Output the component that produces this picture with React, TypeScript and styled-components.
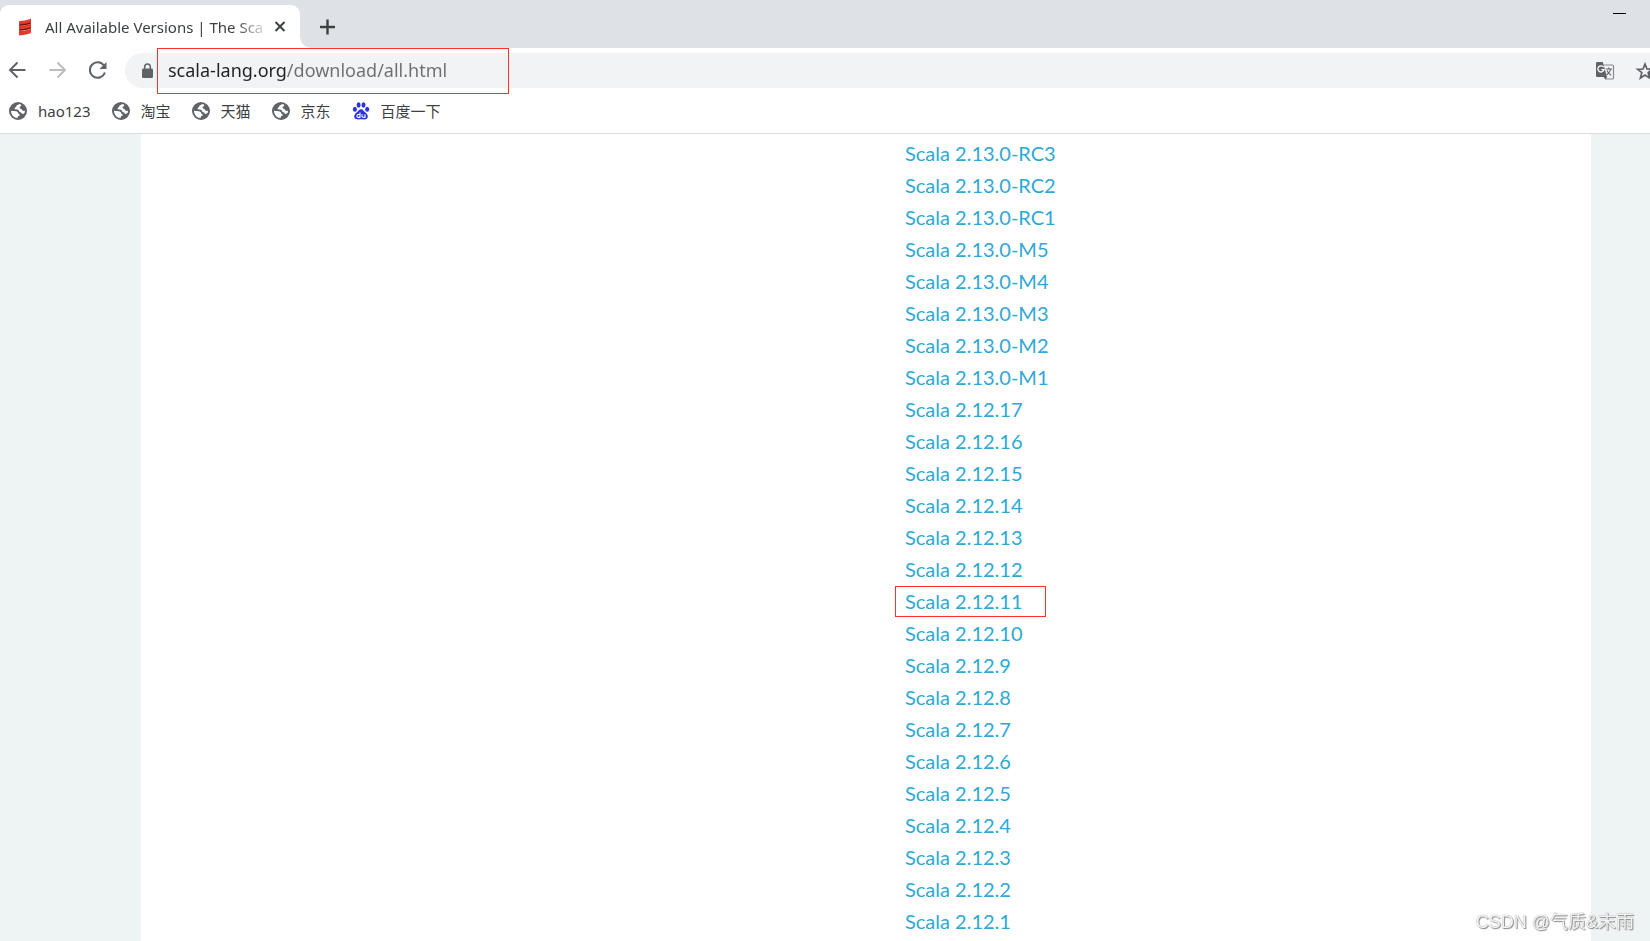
import React from 'react';
import styled, { createGlobalStyle } from 'styled-components';

const GlobalStyle = createGlobalStyle`
  *, *::before, *::after { box-sizing: border-box; }
  body {
    margin: 0;
    background: #fff;
    font-family: "Noto Sans", "Noto Sans CJK SC", sans-serif;
    color: #3c4043;
  }
`;

const Page = styled.div`
  display: flex;
  flex-direction: column;
  min-height: 100vh;
  overflow: hidden;
`;

const TabStrip = styled.header`
  display: flex;
  justify-content: space-between;
  height: 48px;
  padding-top: 5px;
  background: #dee1e6;
`;

const Tabs = styled.div`
  display: flex;
`;

const Tab = styled.div`
  position: relative;
  display: flex;
  align-items: center;
  width: 300px;
  padding: 0 12px 0 16px;
  border-radius: 9px 9px 0 0;
  background: #fff;

  &::after {
    content: "";
    position: absolute;
    left: 100%;
    bottom: 0;
    width: 10px;
    height: 10px;
    background: radial-gradient(circle at 100% 0, transparent 9px, #fff 10px);
  }
`;

const TabTitle = styled.span`
  flex: 1;
  margin-left: 11px;
  overflow: hidden;
  white-space: nowrap;
  font-size: 15px;
  line-height: 24px;
  mask-image: linear-gradient(to right, #000 calc(100% - 36px), transparent calc(100% - 2px));
`;

const IconButton = styled.button<{ $size?: number; $color?: string }>`
  display: flex;
  flex: none;
  align-items: center;
  justify-content: center;
  width: ${(p) => p.$size ?? 24}px;
  height: ${(p) => p.$size ?? 24}px;
  padding: 0;
  border: 0;
  background: none;
  color: ${(p) => p.$color ?? '#5f6368'};
`;

const NewTab = styled(IconButton)`
  align-self: center;
  margin-left: 15px;
`;

const WindowControls = styled.div`
  padding-right: 18px;
`;

const Toolbar = styled.div`
  display: flex;
  align-items: center;
  gap: 16px;
  height: 45px;
  padding-left: 5px;
`;

const NavButtons = styled.div`
  display: flex;
  gap: 16px;
  padding-bottom: 2px;
`;

const AddressBar = styled.div`
  display: flex;
  flex: 1;
  align-items: center;
  height: 35px;
  padding-left: 14px;
  border-radius: 18px 0 0 18px;
  background: #f1f3f4;
`;

const UrlFrame = styled.label`
  flex: none;
  width: 352px;
  height: 46px;
  margin-left: 2px;
  padding-left: 10px;
  border: 1px solid #f8322f;
`;

const UrlInput = styled.input`
  width: 100%;
  height: 44px;
  padding: 0 0 2px;
  border: 0;
  outline: 0;
  font: 18px "Noto Sans", sans-serif;
  color: transparent;
  background: linear-gradient(to right, #202124 119px, #6b6f73 119px);
  background-clip: text;
`;

const AddressActions = styled.div`
  display: flex;
  gap: 16px;
  margin-left: auto;
  margin-right: -7px;
`;

const Bookmarks = styled.nav`
  display: flex;
  align-items: center;
  gap: 21px;
  height: 41px;
  padding: 0 9px 4px;
  border-bottom: 1px solid #dadce0;
`;

const Bookmark = styled.a`
  display: flex;
  align-items: center;
  gap: 11px;
  color: #3c4043;
  font-size: 15px;
  line-height: 24px;
  text-decoration: none;
`;

const Body = styled.div`
  flex: 1;
  padding: 0 59px 0 141px;
  background: #eef3f4;
`;

const Sheet = styled.main`
  display: grid;
  grid-template-columns: 754fr 696fr;
  height: 100%;
  min-height: 807px;
  padding-top: 3px;
  background: #fff;
`;

const Versions = styled.ul`
  grid-column: 2;
  margin: 0;
  padding: 0;
  list-style: none;
`;

const Version = styled.li`
  display: flex;
  align-items: center;
  height: 32px;
`;

const VersionLink = styled.a<{ $framed: boolean }>`
  width: 151px;
  padding-left: 9px;
  border: 1px solid ${(p) => (p.$framed ? '#f8322f' : 'transparent')};
  color: #2fa8d3;
  font-family: Lato, sans-serif;
  font-size: 20px;
  line-height: 29px;
  text-decoration: none;
  white-space: nowrap;
`;

const Watermark = styled.div`
  position: fixed;
  right: 16px;
  bottom: 6px;
  color: #f4f4f4;
  font: 18px/26px "Liberation Sans", "Noto Sans CJK SC", sans-serif;
  text-shadow: 1px 1px 1px #888, 0 0 1px #888;
`;

const ScalaLogo = () => (
  <svg width="18" height="20" viewBox="0 0 18 20" aria-hidden="true">
    <path d="M3 4.2C8 3.6 13 3 15 1.5V6C13 7.6 8 8 3 8.7Z M3 9C8 8.4 13 7.8 15 6.3V11C13 12.6 8 13 3 13.7Z M3 14.1C8 13.5 13 12.9 15 11.4V15.6C13 17.5 8 17.9 3 18.5Z" fill="#e8372a" />
    <path d="M3.5 8.2C8 7.8 13 7 14.6 5.8M3.5 13.2C8 12.8 13 12 14.6 10.8" stroke="#5d1713" strokeWidth="1.3" fill="none" />
  </svg>
);

const Globe = () => (
  <svg width="18" height="18" viewBox="0 0 18 18" aria-hidden="true">
    <circle cx="9" cy="9" r="9" fill="#5f6368" />
    <path d="M10 2C9.6 3.2 7.4 3 7.2 4.4C7.1 5.4 5.4 5.2 5.6 6.8C5.8 8.2 8.4 7.4 9.4 8C10.2 8.5 9.9 10 11.2 10.2C12.6 10.3 12.8 12 14 12C15.2 11.8 16 10.4 16 8.8C14.6 9.2 13.2 8.8 12.8 7.6C12.4 6.6 10.6 7 10.6 5.6C10.7 4.4 12 4.4 12.4 2.9C11.6 2.4 10.8 2.1 10 2Z" fill="#fff" />
    <path d="M2 8.7C4.2 9.1 6.5 8.6 8 9.6C9.6 10.6 8.8 11.8 10.3 12.2C11.3 12.6 11 13.6 10 13.8C8.8 14 9 14.8 8.5 16C4.8 15.8 2 12.8 2 8.7Z" fill="#fff" />
  </svg>
);

const Paw = () => (
  <svg width="18" height="18" viewBox="0 0 18 18" aria-hidden="true">
    <g fill="#2932e1">
      <ellipse cx="2.9" cy="7.2" rx="2" ry="2.5" />
      <ellipse cx="6.6" cy="3" rx="2" ry="2.7" />
      <ellipse cx="11.5" cy="3" rx="2" ry="2.7" />
      <ellipse cx="15.2" cy="7.2" rx="2" ry="2.5" />
      <path d="M9 7.3C11 7.3 11.8 9.2 13.4 10.6C15.6 12.4 16.4 14 15.4 16C14.2 18 11.5 17.3 9 17.3S3.8 18 2.6 16C1.6 14 2.4 12.4 4.6 10.6C6.2 9.2 7 7.3 9 7.3Z" />
    </g>
    <path d="M8 10.6V15.4H6.2C4.5 15.4 4.5 12.5 6.2 12.5H8M10 12.3V14.3C10 15.4 10.6 15.4 13 15.4V12.3" stroke="#fff" strokeWidth="1.1" fill="none" />
  </svg>
);

const Line = ({ d, size = 24, width = 2 }: { d: string; size?: number; width?: number }) => (
  <svg width={size} height={size} viewBox={`0 0 ${size} ${size}`} fill="none" stroke="currentColor" strokeWidth={width} aria-hidden="true">
    <path d={d} />
  </svg>
);

const Reload = () => (
  <svg width="24" height="24" viewBox="0 0 24 24" aria-hidden="true">
    <path d="M18.9 7.5A7.7 7.7 0 1 0 19.9 14.5" fill="none" stroke="currentColor" strokeWidth="2" />
    <path d="M21.5 4V11H14.5Z" fill="currentColor" />
  </svg>
);

const Lock = () => (
  <svg width="16" height="18" viewBox="0 0 16 18" aria-hidden="true">
    <rect x="3" y="6.5" width="11" height="9.5" rx="1.3" fill="#5f6368" />
    <path d="M5.7 7V4.8A2.8 2.8 0 0 1 11.3 4.8V7" fill="none" stroke="#5f6368" strokeWidth="1.5" />
  </svg>
);

const Translate = () => (
  <svg width="20" height="20" viewBox="0 0 20 20" aria-hidden="true">
    <path d="M9 4H17.2Q18.5 4 18.5 5.3V16.7Q18.5 18 17.2 18H11" fill="none" stroke="#85888c" strokeWidth="1.2" />
    <path d="M2.3 1H7.8L12 16H2.3Q1 16 1 14.7V2.3Q1 1 2.3 1Z M8.5 16H12L10.6 18.8Z" fill="#5f6368" />
    <path d="M8.6 6.2A3.1 3.1 0 1 0 9 8.7H6.4" fill="none" stroke="#fff" strokeWidth="1.3" />
    <path d="M10.8 8H17M13.7 6.5V8M15.8 8C15.2 10.8 13.5 12.6 11.6 14M12 9.5C13 11.8 14.2 13 16 14.2" fill="none" stroke="#5f6368" strokeWidth="1.1" />
  </svg>
);

const Star = () => (
  <svg width="20" height="20" viewBox="0 0 20 20" aria-hidden="true">
    <path d="M10 3L12 8L17.4 8.3L13.2 11.6L14.6 17L10 14L5.4 17L6.8 11.6L2.6 8.3L8 8Z" fill="none" stroke="#5f6368" strokeWidth="1.7" />
    <circle cx="16.8" cy="14" r="4" fill="#5f6368" />
  </svg>
);

const sites = ['hao123', '淘宝', '天猫', '京东'];

const versions = [
  ...['RC3', 'RC2', 'RC1', 'M5', 'M4', 'M3', 'M2', 'M1'].map((s) => `2.13.0-${s}`),
  ...Array.from({ length: 17 }, (_, i) => `2.12.${17 - i}`),
];

export default function App() {
  return (
    <Page>
      <GlobalStyle />
      <TabStrip>
        <Tabs>
          <Tab>
            <ScalaLogo />
            <TabTitle>All Available Versions | The Sca</TabTitle>
            <IconButton $size={16} $color="#3c4043" aria-label="Close tab">
              <Line size={16} d="M3.5 3L12.5 12M12.5 3L3.5 12" />
            </IconButton>
          </Tab>
          <NewTab $color="#3c4043" aria-label="New tab">
            <Line d="M12.5 4.5V19.5M5 12H20" width={2.4} />
          </NewTab>
        </Tabs>
        <WindowControls>
          <IconButton $size={24} $color="#000" aria-label="Minimize">
            <Line d="M5 8.5H18" width={1} />
          </IconButton>
        </WindowControls>
      </TabStrip>
      <Toolbar>
        <NavButtons>
          <IconButton aria-label="Back">
            <Line d="M20.5 12H5.5M12.5 4.5L5 12L12.5 19.5" />
          </IconButton>
          <IconButton aria-label="Forward" $color="#bbbdbf">
            <Line d="M4.5 12H19.5M12.5 4.5L20 12L12.5 19.5" />
          </IconButton>
          <IconButton aria-label="Reload">
            <Reload />
          </IconButton>
        </NavButtons>
        <AddressBar>
          <Lock />
          <UrlFrame>
            <UrlInput aria-label="Address" defaultValue="scala-lang.org/download/all.html" spellCheck={false} />
          </UrlFrame>
          <AddressActions>
            <IconButton aria-label="Translate this page">
              <Translate />
            </IconButton>
            <IconButton aria-label="Bookmark this page">
              <Star />
            </IconButton>
          </AddressActions>
        </AddressBar>
      </Toolbar>
      <Bookmarks aria-label="Bookmarks">
        {sites.map((name) => (
          <Bookmark key={name} href="#">
            <Globe />
            {name}
          </Bookmark>
        ))}
        <Bookmark href="#">
          <Paw />
          百度一下
        </Bookmark>
      </Bookmarks>
      <Body>
        <Sheet>
          <Versions>
            {versions.map((v) => (
              <Version key={v}>
                <VersionLink href="#" $framed={v === '2.12.11'}>
                  Scala {v}
                </VersionLink>
              </Version>
            ))}
          </Versions>
        </Sheet>
      </Body>
      <Watermark>CSDN @气质&amp;末雨</Watermark>
    </Page>
  );
}
